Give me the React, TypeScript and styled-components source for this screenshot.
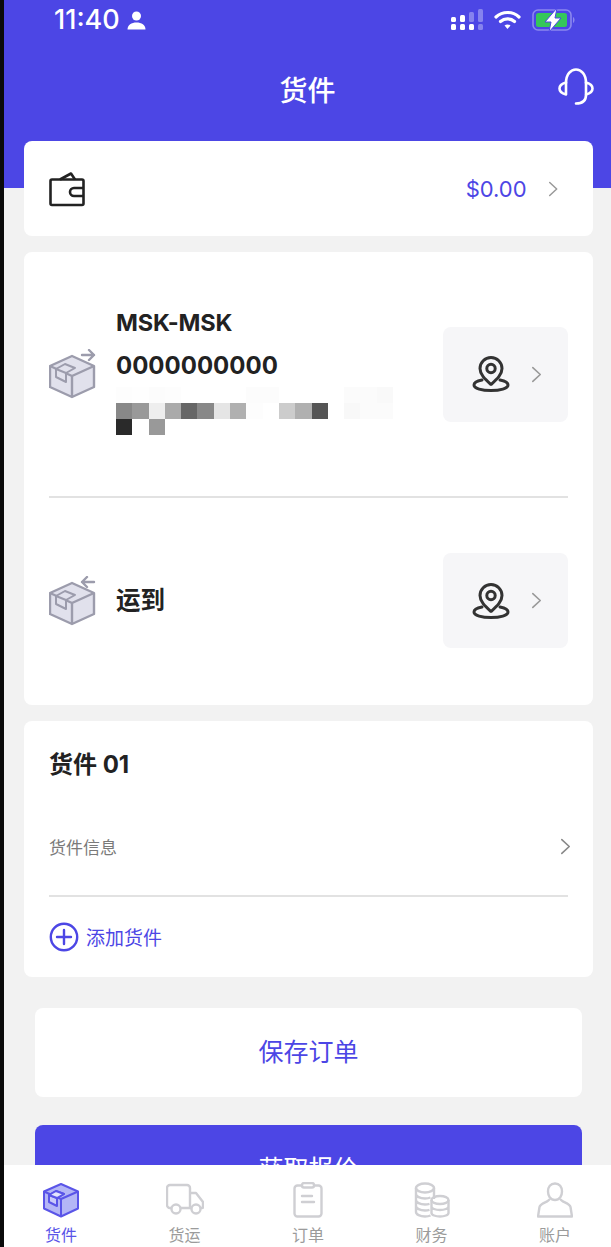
import React from "react";
import styled, { createGlobalStyle } from "styled-components";

const PRIMARY = "#4c46e5";

const GlobalStyle = createGlobalStyle`
  html, body {
    margin: 0;
    padding: 0;
    height: 100%;
    overflow: hidden;
    background: #000;
  }
  body, button {
    font-family: Inter, "Noto Sans CJK SC", "Noto Sans", sans-serif;
  }
`;

const Frame = styled.div`
  display: flex;
  width: 611px;
  height: 1247px;
  background: #0a0a0a;
`;

const Screen = styled.div`
  position: relative;
  width: 607px;
  margin-left: 4px;
  height: 1247px;
  overflow: hidden;
  background: #f2f2f2;
`;

const Header = styled.header`
  height: 188px;
  background: ${PRIMARY};
  margin-bottom: -47px;
`;

const StatusBar = styled.div`
  display: flex;
  align-items: center;
  justify-content: space-between;
  height: 40px;
  padding: 0 35px 0 50px;
  color: #fff;
`;

const TimeGroup = styled.div`
  display: flex;
  align-items: center;
  gap: 7px;
`;

const Time = styled.span`
  font-size: 27px;
  font-weight: 500;
  line-height: 40px;
`;

const StatusIcons = styled.div`
  display: flex;
  align-items: center;
  gap: 11px;
`;

const NavBar = styled.div`
  display: grid;
  grid-template-columns: 1fr auto 1fr;
  align-items: center;
  height: 44px;
  margin-top: 27px;
  padding: 0 16px;
`;

const Title = styled.h1`
  grid-column: 2;
  margin: 0;
  font-size: 28px;
  font-weight: 500;
  color: #fff;
`;

const HeadsetButton = styled.div`
  grid-column: 3;
  justify-self: end;
  align-self: start;
  display: flex;
`;

const Content = styled.main`
  display: flex;
  flex-direction: column;
  gap: 16px;
  padding: 0 18px 0 20px;
`;

const Card = styled.section`
  background: #fff;
  border-radius: 8px;
`;

const WalletCard = styled(Card)`
  display: flex;
  align-items: center;
  justify-content: space-between;
  height: 95px;
  padding: 0 35px 0 25px;
`;

const Balance = styled.div`
  display: flex;
  align-items: center;
  gap: 21px;
  font-size: 22px;
  color: ${PRIMARY};
`;

const RouteCard = styled(Card)`
  padding: 0 25px;
  height: 453px;
  display: flex;
  flex-direction: column;
`;

const RouteRow = styled.div<{ $height: number }>`
  display: flex;
  align-items: center;
  height: ${(p) => p.$height}px;
`;

const RouteInfo = styled.div`
  flex: 1;
  margin-left: 19px;
  min-width: 0;
`;

const RouteLine = styled.div`
  font-size: 24px;
  font-weight: 700;
  color: #222;
  line-height: 43px;
`;

const CarrierLine = styled(RouteLine)`
  font-size: 23.5px;
  letter-spacing: -0.2px;
`;

const PlainLine = styled(RouteLine)`
  font-size: 24.5px;
  font-weight: 600;
`;

const Mosaic = styled.div`
  display: grid;
  grid-template-columns: repeat(17, 16.3px);
  grid-auto-rows: 16px;
  height: 48px;
  margin-bottom: 12px;
`;

const MosaicCell = styled.span<{ $color: string }>`
  background: ${(p) => p.$color};
`;

const LocationButton = styled.div`
  display: flex;
  align-items: center;
  justify-content: flex-end;
  gap: 21px;
  width: 125px;
  height: 95px;
  padding-right: 26px;
  box-sizing: border-box;
  background: #f6f6f8;
  border-radius: 8px;
  flex-shrink: 0;
`;

const Divider = styled.hr`
  width: 100%;
  margin: 0;
  border: 0;
  height: 2px;
  background: #e2e2e2;
  flex-shrink: 0;
`;

const GoodsCard = styled(Card)`
  padding: 0 25px;
  height: 256px;
`;

const GoodsTitle = styled.div`
  font-size: 24px;
  font-weight: 700;
  color: #222;
  line-height: 88px;
`;

const GoodsRow = styled.div`
  display: flex;
  align-items: center;
  justify-content: space-between;
  height: 86px;
  padding-bottom: 12px;
  margin-right: -3px;
  box-sizing: border-box;
  font-size: 17px;
  color: #7a7a7a;
`;

const AddRow = styled.div`
  display: flex;
  align-items: center;
  gap: 7px;
  height: 80px;
  padding-bottom: 1px;
  box-sizing: border-box;
  font-size: 19px;
  color: ${PRIMARY};
`;

const Actions = styled.div`
  display: flex;
  flex-direction: column;
  gap: 28px;
  margin: 15px 11px 0;
`;

const ActionButton = styled.button<{ $primary?: boolean }>`
  height: 89px;
  border: 0;
  padding: 0 0 6px;
  border-radius: 8px;
  font-size: 25px;
  font-weight: 400;
  background: ${(p) => (p.$primary ? PRIMARY : "#fff")};
  color: ${(p) => (p.$primary ? "#fff" : PRIMARY)};
`;

const TabBar = styled.nav`
  position: absolute;
  left: 0;
  right: 0;
  bottom: 0;
  height: 82px;
  display: flex;
  justify-content: space-between;
  padding: 0 16px 0 17px;
  background: #fff;
`;

const Tab = styled.div<{ $active?: boolean }>`
  display: flex;
  flex-direction: column;
  align-items: center;
  width: 80px;
  padding-top: 17px;
  font-size: 16px;
  line-height: 22px;
  color: ${(p) => (p.$active ? "#5a55e8" : "#9b9b9b")};
`;

const TabIcon = styled.div`
  display: flex;
  align-items: center;
  justify-content: center;
  height: 36px;
  margin-bottom: 6px;
`;

const Chevron = ({ size = 16, color = "#999" }: { size?: number; color?: string }) => (
  <svg width={size * 0.65} height={size} viewBox="0 0 10 16" fill="none">
    <path d="M1.5 1.5 8.5 8l-7 6.5" stroke={color} strokeWidth="1.5" strokeLinecap="round" strokeLinejoin="round" />
  </svg>
);

const SignalIcon = () => (
  <svg width="33" height="24" viewBox="-1 0 33 24">
    <g fill="#fff">
      <rect x="0" y="16" width="5" height="6" rx="1.5" />
      <rect x="0" y="9" width="5" height="5" rx="1.5" />
      <rect x="9" y="16" width="5" height="6" rx="1.5" />
      <rect x="9" y="7" width="5" height="7" rx="1.5" />
      <rect x="18" y="16" width="5" height="6" rx="1.5" />
    </g>
    <g fill="#8683ee">
      <rect x="18" y="4" width="5" height="10" rx="1.5" />
      <rect x="27" y="16" width="5" height="6" rx="1.5" />
      <rect x="27" y="1" width="5" height="13" rx="1.5" />
    </g>
  </svg>
);

const WifiIcon = () => (
  <svg width="27" height="20" viewBox="0 0 27 20" fill="none" stroke="#fff" strokeWidth="3.2" strokeLinecap="round">
    <path d="M2 7c6.500-6 16.500-6 23 0" />
    <path d="M6.500 11.500c4-3.500 10-3.500 14 0" />
    <path d="M13.500 19l-3-3.500c1.800-1.200 4.200-1.200 6 0z" fill="#fff" stroke="none" />
  </svg>
);

const BatteryIcon = () => (
  <svg width="44" height="24" viewBox="0 0 44 24" fill="none">
    <rect x="1" y="2" width="38" height="20" rx="5" stroke="#8b88ee" strokeWidth="1.6" />
    <rect x="4" y="5" width="31" height="14" rx="2.500" fill="#35c759" />
    <path d="M41 9c2 .8 2 5.200 0 6z" fill="#8b88ee" />
    <path d="M25 0 13 14h6l-2 10 12-14h-6z" fill="#fff" stroke="#4c46e5" strokeWidth="1" />
  </svg>
);

const PersonGlyph = () => (
  <svg width="19" height="19" viewBox="0 0 19 19" fill="#fff">
    <circle cx="9.500" cy="5" r="4.500" />
    <path d="M.5 18.500c0-4.500 4-7 9-7s9 2.500 9 7z" />
  </svg>
);

const HeadsetIcon = () => (
  <svg width="38" height="38" viewBox="0 0 38 38" fill="none" stroke="#fff" strokeWidth="2.600" strokeLinecap="round" strokeLinejoin="round">
    <path d="M9 16C9 7 14 2.500 19 2.500S29 7 29 16" />
    <path d="M9 15.500c-4 1-6.500 3-6.500 6S5 26.500 9 27.500z" />
    <path d="M29 15.500c4 1 6.500 3 6.500 6S33 26.500 29 27.500z" />
    <path d="M29 28c0 5-3 8.500-10 8.500" />
  </svg>
);

const WalletIcon = () => (
  <svg width="36" height="36" viewBox="0 0 36 36" fill="none" stroke="#222" strokeWidth="2.600" strokeLinejoin="round">
    <rect x="1.500" y="8.500" width="33" height="25.500" rx="1.500" />
    <path d="M11 8.500 22 2.500l4 6" />
    <path d="M34.500 17H25a4 4 0 0 0 0 8h9.500" />
  </svg>
);

const PinIcon = () => (
  <svg width="38" height="36" viewBox="0 0 38 36" fill="none" stroke="#333" strokeWidth="3" strokeLinecap="round">
    <path d="M19 28.500C13 23 8 18.500 8 12.500a11 11 0 0 1 22 0c0 6-5 10.500-11 16z" strokeLinejoin="round" />
    <circle cx="19" cy="12.500" r="4.200" />
    <path d="M10 24c-5 1-8 3-8 5 0 3.500 8 5.500 17 5.500s17-2 17-5.500c0-2-3-4-8-5" />
  </svg>
);

type BoxIconProps = { direction: "out" | "in" };

const BoxIcon = ({ direction }: BoxIconProps) => (
  <svg width="48" height="50" viewBox="1 0 48 50" fill="none" strokeLinejoin="round">
    <path d="M24 7 2 17v21l22 10 22-10V17z" fill="#e1e1ec" stroke="#9c9cac" strokeWidth="2.400" />
    <path d="M2 17l22 10 22-10M24 27v21" stroke="#9c9cac" strokeWidth="2.400" />
    <path d="M8 20l9-5 10 4-9 5v9l-10-5z" fill="#e1e1ec" stroke="#9c9cac" strokeWidth="2" />
    <path d="M8 20l10 4" stroke="#9c9cac" strokeWidth="2" />
    {direction === "out" ? (
      <path d="M34 6h12M41 1l5 5-5 5" stroke="#9c9cac" strokeWidth="2.400" strokeLinecap="round" />
    ) : (
      <path d="M46 6H34M39 1l-5 5 5 5" stroke="#9c9cac" strokeWidth="2.400" strokeLinecap="round" />
    )}
  </svg>
);

const PlusCircleIcon = () => (
  <svg width="30" height="30" viewBox="0 0 30 30" fill="none" stroke={PRIMARY} strokeWidth="2.400" strokeLinecap="round">
    <circle cx="15" cy="15" r="13.200" />
    <path d="M15 8v14M8 15h14" />
  </svg>
);

const TabBoxIcon = () => (
  <svg width="36" height="36" viewBox="0 0 36 36" fill="none" stroke="#5a55e8" strokeWidth="2" strokeLinejoin="round">
    <path d="M18 2 1 9.500v17L18 34.500l17-8v-17z" fill="#b4b6f6" />
    <path d="M1 9.500 18 17l17-7.500M18 17v17.500" />
    <path d="M6 13l7-4 8 3-7 4v8l-8-4z" fill="#c9cafa" />
    <path d="M6 13l8 3" />
    <path d="M13 9l8 3-7 4-8-3z" fill="#e4e5fd" />
  </svg>
);

const TruckIcon = () => (
  <svg width="38" height="34" viewBox="0 0 38 34" fill="none" stroke="#cfcfd3" strokeWidth="2.400" strokeLinejoin="round">
    <path d="M6 25H4a3 3 0 0 1-3-3V5a3 3 0 0 1 3-3h17a3 3 0 0 1 3 3v20H14" />
    <path d="M24 10h6l7 9v5a1 1 0 0 1-1 1h-2M24 25h2" />
    <circle cx="10" cy="26" r="4.500" />
    <circle cx="30" cy="26" r="4.500" />
  </svg>
);

const ClipboardIcon = () => (
  <svg width="30" height="36" viewBox="0 0 30 36" fill="none" stroke="#cfcfd3" strokeWidth="2.400" strokeLinecap="round">
    <rect x="1.500" y="3.500" width="27" height="31" rx="3" />
    <rect x="9" y="1" width="12" height="4.500" rx="2" fill="#fff" />
    <path d="M9 14h10M9 20h12" />
  </svg>
);

const CoinsIcon = () => (
  <svg width="36" height="36" viewBox="0 0 36 36" fill="none" stroke="#cfcfd3" strokeWidth="2.400">
    <ellipse cx="11" cy="6" rx="9" ry="4.500" />
    <path d="M2 6v24c0 2.500 4 4.500 9 4.500 2 0 4-.3 5.500-1M2 12c0 2.500 4 4.500 9 4.500 2 0 4-.3 5.500-1M2 18c0 2.500 4 4.500 9 4.500 1.500 0 3-.2 4.500-.6M2 24c0 2.500 4 4.500 9 4.500 1.500 0 3-.2 4.500-.6M20 6v11" />
    <ellipse cx="26" cy="18" rx="8.500" ry="4" />
    <path d="M17.500 18v13c0 2 4 3.500 8.500 3.500s8.500-1.500 8.500-3.500V18M17.500 24.500c0 2 4 3.500 8.500 3.500s8.500-1.500 8.500-3.500" />
  </svg>
);

const UserIcon = () => (
  <svg width="36" height="36" viewBox="0 0 36 36" fill="none" stroke="#cfcfd3" strokeWidth="2.400" strokeLinejoin="round">
    <path d="M18 1.500c-4.500 0-7 3.500-7 8s2.500 8.500 7 8.500 7-4 7-8.500-2.500-8-7-8z" />
    <path d="M12.500 17c-.5 3-9 4-10 8L1 34.500h34L33.500 25c-1-4-9.500-5-10-8" />
  </svg>
);

const mosaicRows: string[][] = [
  ["#fdfdfd", "#fefefe", "#fcfcfc", "#fdfdfd", "#fff", "#fff", "#fff", "#fff", "#fcfcfc", "#fcfcfc", "#fff", "#fff", "#fff", "#fff", "#fbfbfb", "#fbfbfb", "#f9f9f9"],
  ["#888", "#999", "#eee", "#aaa", "#666", "#888", "#e5e5e5", "#b0b0b0", "#fdfdfd", "#fff", "#ccc", "#b0b0b0", "#555", "#fff", "#f8f8f8", "#fbfbfb", "#fbfbfb"],
  ["#2a2a2a", "#fff", "#999"],
];

const tabs = [
  { label: "货件", icon: <TabBoxIcon />, active: true },
  { label: "货运", icon: <TruckIcon /> },
  { label: "订单", icon: <ClipboardIcon /> },
  { label: "财务", icon: <CoinsIcon /> },
  { label: "账户", icon: <UserIcon /> },
];

const LocationPicker = () => (
  <LocationButton>
    <PinIcon />
    <Chevron size={17} />
  </LocationButton>
);

const App: React.FC = () => {
  return (
    <Frame>
      <GlobalStyle />
      <Screen>
        <Header>
          <StatusBar>
            <TimeGroup>
              <Time>11:40</Time>
              <PersonGlyph />
            </TimeGroup>
            <StatusIcons>
              <SignalIcon />
              <WifiIcon />
              <BatteryIcon />
            </StatusIcons>
          </StatusBar>
          <NavBar>
            <Title>货件</Title>
            <HeadsetButton>
              <HeadsetIcon />
            </HeadsetButton>
          </NavBar>
        </Header>

        <Content>
          <WalletCard>
            <WalletIcon />
            <Balance>
              $0.00
              <Chevron />
            </Balance>
          </WalletCard>

          <RouteCard>
            <RouteRow $height={244}>
              <BoxIcon direction="out" />
              <RouteInfo>
                <CarrierLine>MSK-MSK</CarrierLine>
                <RouteLine>0000000000</RouteLine>
                <Mosaic>
                  {mosaicRows.flat().map((color, i) => (
                    <MosaicCell key={i} $color={color} />
                  ))}
                </Mosaic>
              </RouteInfo>
              <LocationPicker />
            </RouteRow>
            <Divider />
            <RouteRow $height={205}>
              <BoxIcon direction="in" />
              <RouteInfo>
                <PlainLine>运到</PlainLine>
              </RouteInfo>
              <LocationPicker />
            </RouteRow>
          </RouteCard>

          <GoodsCard>
            <GoodsTitle>货件 01</GoodsTitle>
            <GoodsRow>
              货件信息
              <Chevron size={17} color="#888" />
            </GoodsRow>
            <Divider />
            <AddRow>
              <PlusCircleIcon />
              添加货件
            </AddRow>
          </GoodsCard>

          <Actions>
            <ActionButton>保存订单</ActionButton>
            <ActionButton $primary>获取报价</ActionButton>
          </Actions>
        </Content>

        <TabBar>
          {tabs.map((tab) => (
            <Tab key={tab.label} $active={tab.active}>
              <TabIcon>{tab.icon}</TabIcon>
              {tab.label}
            </Tab>
          ))}
        </TabBar>
      </Screen>
    </Frame>
  );
};

export default App;
